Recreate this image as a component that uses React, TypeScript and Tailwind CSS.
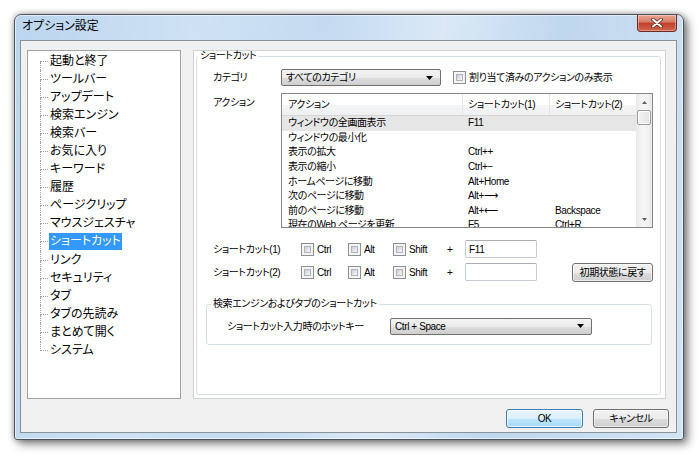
const treeItems = [
  "起動と終了",
  "ツールバー",
  "アップデート",
  "検索エンジン",
  "検索バー",
  "お気に入り",
  "キーワード",
  "履歴",
  "ページクリップ",
  "マウスジェスチャ",
  "ショートカット",
  "リンク",
  "セキュリティ",
  "タブ",
  "タブの先読み",
  "まとめて開く",
  "システム",
];

const rows = [
  ["ウィンドウの全画面表示", "F11", ""],
  ["ウィンドウの最小化", "", ""],
  ["表示の拡大", "Ctrl++", ""],
  ["表示の縮小", "Ctrl+−", ""],
  ["ホームページに移動", "Alt+Home", ""],
  ["次のページに移動", "Alt+⟶", ""],
  ["前のページに移動", "Alt+⟵", "Backspace"],
  ["現在のWeb ページを更新", "F5", "Ctrl+R"],
];

function Checkbox() {
  return (
    <span className="flex h-[13px] w-[13px] shrink-0 border border-[#8e8f8f] bg-[#f4f4f4] p-[2px]">
      <span className="flex-1 border border-[#aeb3b9] bg-gradient-to-br from-[#cbcfd5] to-[#f7f7f7]" />
    </span>
  );
}

function Arrow() {
  return (
    <svg width="7" height="4" viewBox="0 0 7 4" className="shrink-0">
      <path d="M0 0H7L3.5 4Z" fill="#000" />
    </svg>
  );
}

function Combo({ text, width }: { text: string; width: string }) {
  return (
    <div
      className={`flex h-[17px] items-center justify-between rounded-[2px] border border-[#707070] bg-[linear-gradient(#f2f2f2_0%,#ebebeb_50%,#dddddd_51%,#cfcfcf_100%)] pl-[4px] pr-[7px] ${width}`}
    >
      <span>{text}</span>
      <Arrow />
    </div>
  );
}

function TextBox({ value }: { value?: string }) {
  return (
    <div className="flex h-[18px] w-[72px] items-center rounded-[2px] border border-[#c5cbd2] border-t-[#abadb3] bg-white pl-[3px]">
      {value}
    </div>
  );
}

function Button({ label, primary, width }: { label: string; primary?: boolean; width: string }) {
  return (
    <div
      className={`flex h-[19px] items-center justify-center rounded-[3px] border ${
        primary
          ? "border-[#3c7fb1] bg-[linear-gradient(#eaf6fd_0%,#d9f0fc_50%,#bee6fd_51%,#a7d9f5_100%)] shadow-[inset_0_0_0_1px_rgba(255,255,255,0.7)]"
          : "border-[#707070] bg-[linear-gradient(#f2f2f2_0%,#ebebeb_50%,#dddddd_51%,#cfcfcf_100%)] shadow-[inset_0_0_0_1px_rgba(255,255,255,0.6)]"
      } ${width}`}
    >
      {label}
    </div>
  );
}

function ModifierRow({ label, children }: { label: string; children?: React.ReactNode }) {
  return (
    <div className="flex items-center">
      <span className="w-[88px]">{label}</span>
      <Checkbox />
      <span className="ml-[3px] w-[31px]">Ctrl</span>
      <Checkbox />
      <span className="ml-[3px] w-[29px]">Alt</span>
      <Checkbox />
      <span className="ml-[3px] w-[38px]">Shift</span>
      <span className="w-[18px]">+</span>
      {children}
    </div>
  );
}

export default function App() {
  return (
    <div className="h-[456px] w-[700px] overflow-hidden bg-white pl-[14px] pt-[14px] text-[10px] tracking-[-0.4px] text-black [font-family:'Liberation_Sans','Noto_Sans_CJK_JP',sans-serif] [font-feature-settings:'palt']">
      <div className="flex h-[426px] w-[670px] flex-col rounded-t-[7px] rounded-b-[3px] border border-[#4b5560] bg-[linear-gradient(100deg,#bad5ee_0%,#cfe2f4_25%,#c3daf0_42%,#dbe9f6_58%,#bfd7ee_74%,#d2e4f4_100%)] shadow-[0_0_6px_rgba(0,0,0,0.35),4px_4px_10px_rgba(0,0,0,0.45),inset_0_0_0_1px_rgba(255,255,255,0.55)]">
        {/* Title bar */}
        <div className="flex h-[25px] shrink-0 items-start justify-between pl-[7px] pr-[6px]">
          <span className="mt-[4px] text-[12px] leading-[14px] tracking-normal">オプション設定</span>
          <div className="flex h-[17px] w-[40px] items-center justify-center rounded-b-[4px] border border-t-0 border-[#6b2a22] bg-[linear-gradient(#e9a692_0%,#d57a62_45%,#c0402a_50%,#d0654b_100%)] shadow-[inset_0_0_0_1px_rgba(255,255,255,0.35)]">
            <svg width="12" height="10" viewBox="0 0 12 10">
              <path d="M2 1.5L10 8.5M10 1.5L2 8.5" stroke="#5b2a22" strokeWidth="3.6" strokeLinecap="round" />
              <path d="M2 1.5L10 8.5M10 1.5L2 8.5" stroke="#fff" strokeWidth="2" strokeLinecap="round" />
            </svg>
          </div>
        </div>

        {/* Client area */}
        <div className="mb-[6px] ml-[5px] mr-[6px] flex flex-1 flex-col border border-[#8a9299] bg-[#f0f0f0]">
          <div className="flex pl-[6px] pt-[9px]">
            {/* Tree */}
            <div className="h-[349px] w-[154px] border border-[#9fa3a8] bg-white pt-[1px] text-[12px] tracking-normal">
              {treeItems.map((item, i) => (
                <div key={item} className="flex h-[18.1px] items-stretch">
                  <div className="w-[12px] shrink-0" />
                  <div className="flex w-[8px] shrink-0 flex-col">
                    <div
                      className={`flex-1 border-b border-dotted border-[#a0a0a0] ${
                        i > 0 ? "border-l" : ""
                      }`}
                    />
                    <div className={`flex-1 border-dotted border-[#a0a0a0] ${i < treeItems.length - 1 ? "border-l" : ""}`} />
                  </div>
                  <div className="flex items-center pl-[1px]">
                    <span
                      className={`px-[1px] leading-[17px] ${
                        i === 10 ? "bg-[#3399ff] text-white" : ""
                      }`}
                    >
                      {item}
                    </span>
                  </div>
                </div>
              ))}
            </div>

            {/* Right panel */}
            <div className="ml-[12px] h-[349px] w-[473px] border border-[#d0d3d6] bg-white pl-[2px]">
              <fieldset className="h-[344px] w-[465px] rounded-[3px] border border-[#d5dfe5]">
                <legend className="ml-[1px] px-[2px] leading-[10px]">ショートカット</legend>

                <div className="pl-[16px]">
                  <div className="mt-[8px] flex h-[17px] items-center">
                    <span className="w-[68px]">カテゴリ</span>
                    <Combo text="すべてのカテゴリ" width="w-[160px]" />
                    <span className="ml-[12px]">
                      <Checkbox />
                    </span>
                    <span className="ml-[3px]">割り当て済みのアクションのみ表示</span>
                  </div>

                  <div className="mt-[7px] flex">
                    <span className="w-[68px] pt-[2px]">アクション</span>
                    <div className="flex h-[135px] w-[372px] border border-[#828790] bg-white">
                      <div className="flex flex-1 flex-col overflow-hidden">
                        <div className="flex h-[22px] shrink-0 items-center border-b border-[#d5d5d5] bg-[linear-gradient(#ffffff_0%,#ffffff_50%,#f4f5f7_51%,#eff0f2_100%)]">
                          <span className="h-full w-[181px] border-r border-[#e3e4e6] pl-[6px] leading-[22px]">アクション</span>
                          <span className="h-full w-[87px] border-r border-[#e3e4e6] pl-[5px] leading-[22px]">ショートカット(1)</span>
                          <span className="h-full flex-1 pl-[5px] leading-[22px]">ショートカット(2)</span>
                        </div>
                        {rows.map((r, i) => (
                          <div
                            key={r[0]}
                            className={`flex h-[14.6px] shrink-0 items-center leading-[14px] ${
                              i === 0 ? "bg-[#e6e6e6]" : ""
                            }`}
                          >
                            <span className="w-[181px] whitespace-nowrap pl-[6px]">{r[0]}</span>
                            <span className="w-[87px] pl-[5px]">{r[1]}</span>
                            <span className="flex-1 pl-[5px]">{r[2]}</span>
                          </div>
                        ))}
                      </div>
                      {/* Scrollbar */}
                      <div className="flex w-[16px] shrink-0 flex-col items-center bg-[linear-gradient(90deg,#e9e9e9,#f5f5f5_40%,#f5f5f5_60%,#e9e9e9)]">
                        <div className="flex h-[16px] items-center justify-center">
                          <svg width="5" height="3" viewBox="0 0 5 3">
                            <path d="M0 3H5L2.5 0Z" fill="#5f5f5f" />
                          </svg>
                        </div>
                        <div className="h-[15px] w-[14px] rounded-[2px] border border-[#9a9a9a] bg-[linear-gradient(90deg,#f3f3f3,#e2e2e2)] shadow-[inset_0_0_0_1px_#fff]" />
                        <div className="flex-1" />
                        <div className="flex h-[16px] items-center justify-center">
                          <svg width="5" height="3" viewBox="0 0 5 3">
                            <path d="M0 0H5L2.5 3Z" fill="#5f5f5f" />
                          </svg>
                        </div>
                      </div>
                    </div>
                  </div>

                  <div className="mt-[12px]">
                    <ModifierRow label="ショートカット(1)">
                      <TextBox value="F11" />
                    </ModifierRow>
                  </div>
                  <div className="mt-[4px] flex h-[20px] items-center">
                    <ModifierRow label="ショートカット(2)">
                      <TextBox />
                      <div className="ml-[35px]">
                        <Button label="初期状態に戻す" width="w-[81px]" />
                      </div>
                    </ModifierRow>
                  </div>

                  <fieldset className="ml-[-7px] mt-[17px] w-[446px] rounded-[3px] border border-[#d5dfe5] pb-[10px]">
                    <legend className="ml-[4px] px-[2px] leading-[10px]">検索エンジンおよびタブのショートカット</legend>
                    <div className="mt-[9px] flex h-[16px] items-center pl-[20px]">
                      <span className="w-[163px]">ショートカット入力時のホットキー</span>
                      <Combo text="Ctrl + Space" width="w-[202px]" />
                    </div>
                  </fieldset>
                </div>
              </fieldset>
            </div>
          </div>

          {/* Bottom buttons */}
          <div className="mt-[10px] flex justify-end gap-[10px] pr-[7px]">
            <Button label="OK" primary width="w-[77px]" />
            <Button label="キャンセル" width="w-[76px]" />
          </div>
        </div>
      </div>
    </div>
  );
}
